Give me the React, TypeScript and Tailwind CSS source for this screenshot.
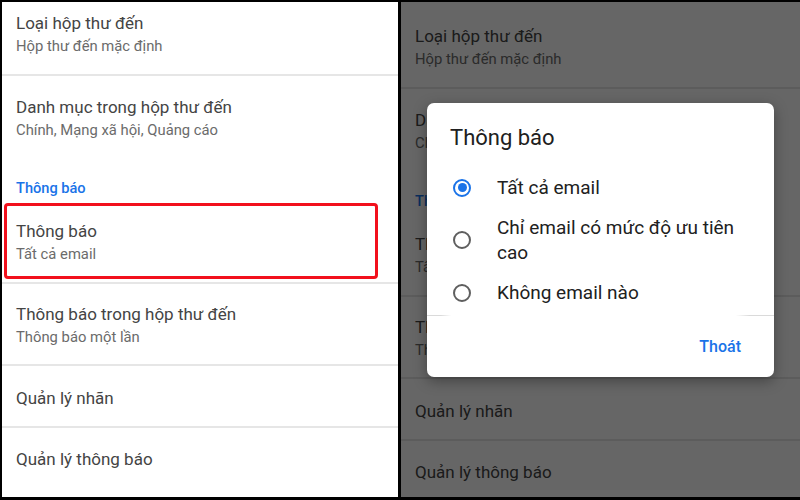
import React from "react";

interface Row {
  title: string;
  subtitle?: string;
  pad: string; // padding classes for the row
  divider?: boolean;
  highlight?: boolean;
}

const rows: Row[] = [
  { title: "Loại hộp thư đến", subtitle: "Hộp thư đến mặc định", pad: "pt-[9px] pb-[17px]", divider: true },
  { title: "Danh mục trong hộp thư đến", subtitle: "Chính, Mạng xã hội, Quảng cáo", pad: "pt-[19px] pb-[20px]" },
];

const rowsAfter: Row[] = [
  { title: "Thông báo", subtitle: "Tất cả email", pad: "pt-[18px] pb-[17px]", divider: true, highlight: true },
  { title: "Thông báo trong hộp thư đến", subtitle: "Thông báo một lần", pad: "pt-[18px] pb-[16px]", divider: true },
  { title: "Quản lý nhãn", pad: "pt-[20px] pb-[16px]", divider: true },
  { title: "Quản lý thông báo", pad: "pt-[19px] pb-[20px]" },
];

const SettingRow: React.FC<{ row: Row; showBox: boolean }> = ({ row, showBox }) => (
  <>
    <div className={`relative pl-[14px] ${row.pad}`}>
      <div className="text-[17px] leading-[24px] text-[#444444]">{row.title}</div>
      {row.subtitle && (
        <div className="text-[14.8px] leading-[22px] text-[#6b6b6b]">{row.subtitle}</div>
      )}
      {/* Red annotation box */}
      {row.highlight && showBox && (
        <div className="absolute left-[2px] top-[2px] w-[374px] bottom-[3px] border-[3px] border-[#f2101c] rounded-[4px]" />
      )}
    </div>
    {row.divider && <div className="h-[2px] bg-[#e6e6e6]" />}
  </>
);

const SettingsList: React.FC<{ showBox?: boolean }> = ({ showBox = false }) => (
  <div className="flex flex-col">
    {rows.map((r) => (
      <SettingRow key={r.title} row={r} showBox={showBox} />
    ))}
    <div className="pl-[14px] pt-[17px] pb-[3px] text-[14.6px] leading-[20px] font-medium text-[#1a73e8]">
      Thông báo
    </div>
    {rowsAfter.map((r) => (
      <SettingRow key={r.title} row={r} showBox={showBox} />
    ))}
  </div>
);

const Radio: React.FC<{ checked?: boolean }> = ({ checked = false }) => (
  <div
    className={`w-[18px] h-[18px] shrink-0 rounded-full border-2 flex items-center justify-center ${
      checked ? "border-[#1a73e8]" : "border-[#5f5f5f]"
    }`}
  >
    {checked && <div className="w-[9px] h-[9px] rounded-full bg-[#1a73e8]" />}
  </div>
);

const options = [
  { label: "Tất cả email", checked: true },
  { label: "Chỉ email có mức độ ưu tiên cao", checked: false },
  { label: "Không email nào", checked: false },
];

const NotifyDialog: React.FC = () => (
  <div className="absolute left-[26px] top-[101px] w-[347px] h-[274px] bg-white rounded-[7px] shadow-[0_4px_14px_rgba(0,0,0,0.35)] flex flex-col">
    <div className="pl-[23px] pt-[21px] text-[22px] leading-[28px] text-[#202020]">Thông báo</div>
    <div className="mt-[23px] flex flex-col gap-[15px]">
      {options.map((o) => (
        <div key={o.label} className="flex items-center pl-[26px] pr-[20px]">
          <Radio checked={o.checked} />
          <span className="ml-[26px] text-[19px] leading-[25px] text-[#212121]">{o.label}</span>
        </div>
      ))}
    </div>
    <div className="mt-[10px] h-px bg-[linear-gradient(to_right,#dadada_0%,#dadada_4%,#ffffff_7%,#ffffff_89%,#dadada_93%,#dadada_100%)]" />
    <div className="flex justify-end pr-[33px] pt-[21px]">
      <span className="text-[16px] leading-[20px] font-medium text-[#1a73e8]">Thoát</span>
    </div>
  </div>
);

export default function App() {
  return (
    <div className="w-[800px] h-[500px] bg-black flex gap-[3px] pt-[2px] pb-[3px] pl-[2px] overflow-hidden font-['Roboto','Noto_Sans',sans-serif]">
      {/* Left: settings with highlighted row */}
      <div className="w-[396px] bg-white overflow-hidden">
        <SettingsList showBox />
      </div>

      {/* Right: same screen dimmed with the dialog on top */}
      <div className="relative flex-1 bg-white overflow-hidden">
        <div className="pt-[13px]">
          <SettingsList />
        </div>
        <div className="absolute inset-0 bg-black/60" />
        <NotifyDialog />
      </div>
    </div>
  );
}
